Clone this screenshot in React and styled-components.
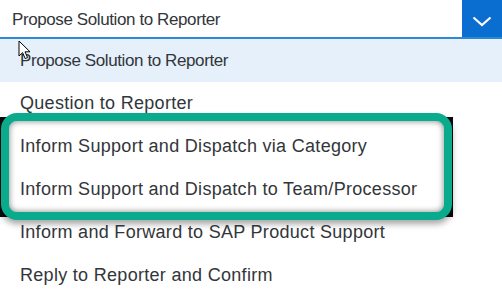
import styled, { createGlobalStyle } from "styled-components";

const GlobalStyle = createGlobalStyle`
  html, body {
    margin: 0;
    padding: 0;
    background: #ffffff;
  }
  body {
    font-family: "Liberation Sans", Arial, sans-serif;
  }
`;

const options = [
  "Propose Solution to Reporter",
  "Question to Reporter",
  "Inform Support and Dispatch via Category",
  "Inform Support and Dispatch to Team/Processor",
  "Inform and Forward to SAP Product Support",
  "Reply to Reporter and Confirm",
];

const App = () => {
  return (
    <>
      <GlobalStyle />
      <StyledPage>
        <StyledSelect>
          <StyledValue>Propose Solution to Reporter</StyledValue>
          <StyledArrowButton>
            <svg width="20" height="11" viewBox="0 0 20 11">
              <polyline
                points="1.5,1.5 10,9 18.5,1.5"
                fill="none"
                stroke="#ffffff"
                strokeWidth="2.2"
              />
            </svg>
          </StyledArrowButton>
        </StyledSelect>
        <StyledList>
          {options.map((text, i) => (
            <StyledItem key={text} $selected={i === 0}>
              {text}
            </StyledItem>
          ))}
        </StyledList>
        {/* annotation drawn over the screenshot */}
        <StyledCalloutBack />
        <StyledCallout />
        <StyledCursor width="14" height="21" viewBox="0 0 14 21">
          <path
            d="M1 1 L1 16 L4.6 12.6 L7.2 18.6 L9.6 17.6 L7 11.8 L12 11.8 Z"
            fill="#ffffff"
            stroke="#000000"
            strokeWidth="1"
            strokeLinejoin="round"
          />
        </StyledCursor>
      </StyledPage>
    </>
  );
};

export default App;

const StyledPage = styled.div`
  position: relative;
  isolation: isolate;
  width: 502px;
  height: 294px;
  overflow: hidden;
  background: #ffffff;
`;

const StyledSelect = styled.div`
  display: flex;
  align-items: stretch;
  height: 37px;
  border-bottom: 2px solid #2b8ad3;
  box-sizing: content-box;
`;

const StyledValue = styled.div`
  flex: 1;
  display: flex;
  align-items: center;
  padding: 2px 0 0 12px;
  font-size: 17px;
  letter-spacing: -0.4px;
  color: #32363a;
`;

const StyledArrowButton = styled.div`
  width: 40px;
  background: #0a6ed1;
  display: flex;
  align-items: center;
  justify-content: center;
  padding-top: 6px;
  box-sizing: border-box;
`;

const StyledList = styled.ul`
  position: relative;
  z-index: 2;
  list-style: none;
  margin: 0;
  padding: 0;
`;

const StyledItem = styled.li`
  height: 43px;
  display: flex;
  align-items: center;
  padding-left: 20px;
  font-size: ${(p) => (p.$selected ? "17px" : "18px")};
  letter-spacing: ${(p) => (p.$selected ? "-0.4px" : "0.3px")};
  color: #32363a;
  background: ${(p) => (p.$selected ? "#e5f0fa" : "transparent")};
`;

const StyledCalloutBack = styled.div`
  position: absolute;
  z-index: 0;
  left: 0;
  top: 117px;
  width: 453px;
  height: 100px;
  background: #0b0b0b;
`;

const StyledCallout = styled.div`
  position: absolute;
  z-index: 1;
  left: 1px;
  top: 113px;
  width: 451px;
  height: 107px;
  box-sizing: border-box;
  background: #ffffff;
  border: 8px solid #0aab8c;
  border-radius: 16px;
  box-shadow: inset 0 0 6px rgba(0, 0, 0, 0.5), 0 4px 6px rgba(0, 0, 0, 0.35);
`;

const StyledCursor = styled.svg`
  position: absolute;
  z-index: 3;
  left: 18px;
  top: 40px;
`;
